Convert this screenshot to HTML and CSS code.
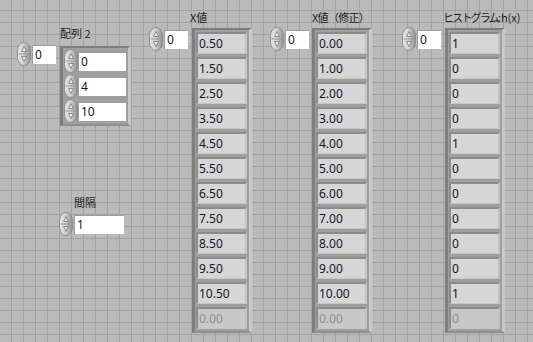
FILE: index.html
```html
<!DOCTYPE html>
<html lang="ja">
<head>
    <meta charset="UTF-8">
    <title>Histogram panel</title>
    <link rel="stylesheet" href="styles.css">
</head>
<body>
    <svg class="defs" width="0" height="0">
        <defs>
            <linearGradient id="spinFill" x1="0" x2="1" y1="0" y2="0">
                <stop offset="0" stop-color="#e6e6e6"/>
                <stop offset="0.45" stop-color="#d2d2d2"/>
                <stop offset="1" stop-color="#8e8e8e"/>
            </linearGradient>
            <symbol id="spin" viewBox="0 0 14 24">
                <rect x="0.5" y="0.5" width="13" height="23" rx="6.5" ry="8" fill="url(#spinFill)" stroke="#8c8c8c"/>
                <line x1="1.5" y1="12" x2="12.5" y2="12" stroke="#9a9a9a"/>
                <path d="M7 4.5 L9.5 9.5 L4.5 9.5 Z" fill="#e8e8e8" stroke="#7a7a7a" stroke-width="0.8"/>
                <path d="M7 19.5 L9.5 14.5 L4.5 14.5 Z" fill="#e8e8e8" stroke="#7a7a7a" stroke-width="0.8"/>
            </symbol>
        </defs>
    </svg>

    <div class="panel">
        <!-- 配列 2 -->
        <div class="label lbl-arr2">配列 2</div>
        <div class="idx idx-arr2">
            <svg class="spin"><use href="#spin"/></svg>
            <div class="num">0</div>
        </div>
        <div class="arr arr2">
            <div class="ctrl"><svg class="spin"><use href="#spin"/></svg><div class="num wide">0</div></div>
            <div class="ctrl"><svg class="spin"><use href="#spin"/></svg><div class="num wide">4</div></div>
            <div class="ctrl"><svg class="spin"><use href="#spin"/></svg><div class="num wide">10</div></div>
        </div>

        <!-- 間隔 -->
        <div class="label lbl-gap">間隔</div>
        <div class="idx idx-gap">
            <svg class="spin"><use href="#spin"/></svg>
            <div class="num wide">1</div>
        </div>

        <!-- X値 -->
        <div class="label lbl-x">X値</div>
        <div class="idx idx-x">
            <svg class="spin"><use href="#spin"/></svg>
            <div class="num">0</div>
        </div>
        <div class="arr col col-x">
            <div class="cell">0.50</div>
            <div class="cell">1.50</div>
            <div class="cell">2.50</div>
            <div class="cell">3.50</div>
            <div class="cell">4.50</div>
            <div class="cell">5.50</div>
            <div class="cell">6.50</div>
            <div class="cell">7.50</div>
            <div class="cell">8.50</div>
            <div class="cell">9.50</div>
            <div class="cell">10.50</div>
            <div class="cell off">0.00</div>
        </div>

        <!-- X値（修正） -->
        <div class="label lbl-xfix">X値（修正）</div>
        <div class="idx idx-xfix">
            <svg class="spin"><use href="#spin"/></svg>
            <div class="num">0</div>
        </div>
        <div class="arr col col-xfix">
            <div class="cell">0.00</div>
            <div class="cell">1.00</div>
            <div class="cell">2.00</div>
            <div class="cell">3.00</div>
            <div class="cell">4.00</div>
            <div class="cell">5.00</div>
            <div class="cell">6.00</div>
            <div class="cell">7.00</div>
            <div class="cell">8.00</div>
            <div class="cell">9.00</div>
            <div class="cell">10.00</div>
            <div class="cell off">0.00</div>
        </div>

        <!-- ヒストグラム -->
        <div class="label lbl-hist"><span class="kana">ヒストグラム</span>:h(x)</div>
        <div class="idx idx-hist">
            <svg class="spin"><use href="#spin"/></svg>
            <div class="num">0</div>
        </div>
        <div class="arr col col-hist">
            <div class="cell">1</div>
            <div class="cell">0</div>
            <div class="cell">0</div>
            <div class="cell">0</div>
            <div class="cell">1</div>
            <div class="cell">0</div>
            <div class="cell">0</div>
            <div class="cell">0</div>
            <div class="cell">0</div>
            <div class="cell">0</div>
            <div class="cell">1</div>
            <div class="cell off">0</div>
        </div>
    </div>
</body>
</html>
```

FILE: styles.css
```css
body {
    margin: 0;
    font-family: "Noto Sans", "Noto Sans CJK JP", sans-serif;
}
.defs {
    position: absolute;
}
.panel {
    position: relative;
    width: 533px;
    height: 342px;
    overflow: hidden;
    background-color: #bababa;
    background-image:
        linear-gradient(#a3a3a3 1px, transparent 1px),
        linear-gradient(90deg, #a3a3a3 1px, transparent 1px);
    background-size: 12px 12px;
    background-position: 11px 10px;
}

/* labels */
.label {
    position: absolute;
    font-family: "Noto Sans CJK JP", sans-serif;
    font-size: 11px;
    line-height: 14px;
    color: #1c1c1c;
    white-space: nowrap;
}
.lbl-arr2 { left: 60px; top: 26px; }
.lbl-gap { left: 74px; top: 195px; }
.lbl-x { left: 190px; top: 10px; }
.lbl-xfix { left: 312px; top: 10px; letter-spacing: -0.7px; }
.lbl-hist { left: 443px; top: 10px; }
.lbl-hist .kana { letter-spacing: -1.8px; }

/* spinner + box */
.spin {
    width: 14px;
    height: 24px;
    flex: none;
}
.idx {
    position: absolute;
    display: flex;
    align-items: center;
    gap: 1px;
}
.num {
    box-sizing: border-box;
    width: 24px;
    height: 19px;
    background: #fff;
    border-top: 1px solid #9c9c9c;
    border-left: 1px solid #9c9c9c;
    font-size: 12px;
    line-height: 18px;
    padding-left: 2px;
    color: #14142a;
}
.num.wide {
    width: 50px;
}
.idx-arr2 { left: 17px; top: 42px; }
.idx-gap { left: 59px; top: 212px; }
.idx-x { left: 149px; top: 27px; }
.idx-xfix { left: 270px; top: 27px; }
.idx-hist { left: 402px; top: 27px; }

/* array frames */
.arr {
    position: absolute;
    display: flex;
    flex-direction: column;
    gap: 3px;
    padding: 2px 2px 2px 1px;
    background: #9f9f9f;
    border-top: 2px solid #7e7e7e;
    border-left: 3px solid #7e7e7e;
    border-right: 3px solid #c9c9c9;
    border-bottom: 2px solid #8e8e8e;
}
.arr2 {
    left: 60px;
    top: 46px;
    width: 62px;
}
.ctrl {
    display: flex;
    align-items: center;
    height: 22px;
}
.col {
    top: 28px;
    width: 51px;
}
.col-x { left: 192px; }
.col-xfix { left: 312px; }
.col-hist { left: 445px; }

.cell {
    box-sizing: border-box;
    height: 22px;
    background: #d6d6d6;
    border-top: 2px solid #8b8b8b;
    border-left: 2px solid #8b8b8b;
    border-right: 2px solid #c2c2c2;
    border-bottom: 1px solid #c6c6c6;
    padding-left: 1px;
    font-size: 12px;
    line-height: 19px;
    color: #14142a;
}
.cell.off {
    color: #8c8c96;
    background: #c8c8c8;
}
```
